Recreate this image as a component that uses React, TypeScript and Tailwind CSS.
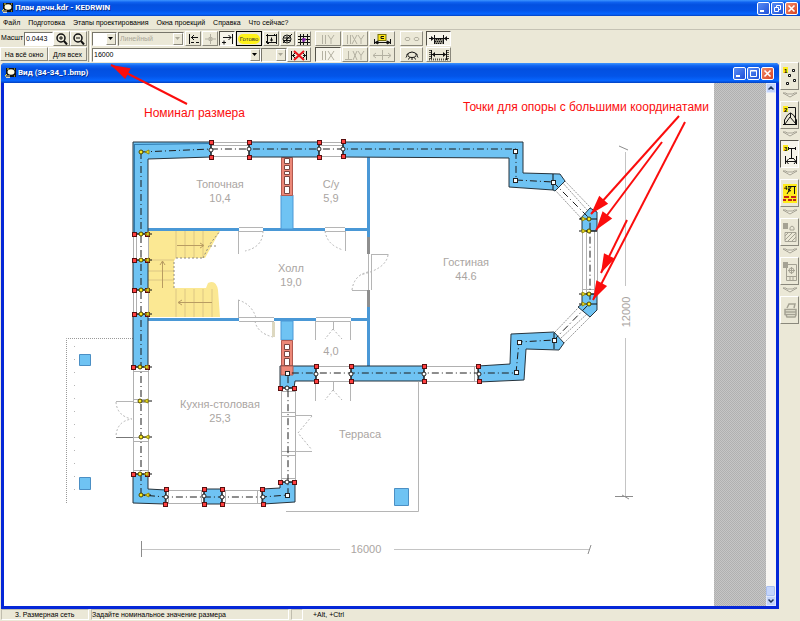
import type { ReactNode } from 'react';

const UI_FONT = "font-['Liberation_Sans',sans-serif]";

/* ---------- chrome ---------- */

function AppIcon() {
  return (
    <svg viewBox="0 0 11 10" className="w-[11px] h-[10px] shrink-0" aria-hidden="true">
      <rect x="1" y="0" width="10" height="9" fill="#111" />
      <ellipse cx="6" cy="4" rx="3.5" ry="2.8" fill="#fffbe0" />
      <path d="M2 1h2M9 1h1M9 8h1" stroke="#f5e642" />
      <path d="M0 8h5M1 9.5h4" stroke="#d8d4c0" />
      <path d="M2 6l-2 2" stroke="#f5e642" />
    </svg>
  );
}

function CaptionButton({
  label,
  danger,
  children,
}: {
  label: string;
  danger?: boolean;
  children: ReactNode;
}) {
  return (
    <button
      type="button"
      aria-label={label}
      className={
        'w-[13px] h-[13px] rounded-[2px] border border-white flex items-center justify-center ' +
        (danger ? 'bg-linear-to-br from-[#f08a68] to-[#d8401c]' : 'bg-linear-to-br from-[#5a8cf4] to-[#2050d8]')
      }
    >
      <svg viewBox="0 0 11 11" className="w-[11px] h-[11px]" fill="none" stroke="#fff">
        {children}
      </svg>
    </button>
  );
}

function TitleBar({ title, restore, size }: { title: string; restore?: boolean; size: string }) {
  return (
    <div
      className={
        'shrink-0 flex items-center bg-[linear-gradient(#3d95ff_0%,#0f62f0_14%,#0350e0_30%,#0354e8_65%,#0766ff_88%,#0340c0_100%)] ' +
        size
      }
    >
      <AppIcon />
      <span className="ml-[2px] flex-1 whitespace-nowrap font-bold text-[8px] leading-[12px] text-white font-['Roboto',sans-serif] [text-shadow:1px_1px_0_#0a2f90]">
        {title}
      </span>
      <div className="flex gap-px">
        <CaptionButton label="Свернуть">
          <path d="M2 8h4" strokeWidth="2" />
        </CaptionButton>
        <CaptionButton label={restore ? 'Восстановить' : 'Развернуть'}>
          {restore ? (
            <path d="M4.500 4V2.500h4v4H7M2.500 4.500h4v4h-4z" />
          ) : (
            <path d="M2.500 3v5.500h6V2.500h-6M2 3h7" />
          )}
        </CaptionButton>
        <CaptionButton label="Закрыть" danger>
          <path d="M2.500 2.500l6 6M8.500 2.500l-6 6" strokeWidth="1.600" />
        </CaptionButton>
      </div>
    </div>
  );
}

const MENU = ['Файл', 'Подготовка', 'Этапы проектирования', 'Окна проекций', 'Справка', 'Что сейчас?'];

function MenuBar() {
  return (
    <nav className="shrink-0 h-[14px] pl-[3px] flex items-center gap-2 border-b border-[#c5c2b4]">
      {MENU.map((item) => (
        <button key={item} type="button" className="text-[7px] leading-[10px] whitespace-nowrap text-black">
          {item}
        </button>
      ))}
    </nav>
  );
}

/* ---------- toolbar ---------- */

const RAISED = 'border border-t-white border-l-white border-r-[#8a887c] border-b-[#8a887c] bg-[#ebe8d7]';
const SUNKEN = 'border border-t-[#55534a] border-l-[#55534a] border-r-white border-b-white bg-[#f6f4ea]';

function Tool({
  label,
  width,
  pressed,
  disabled,
  children,
}: {
  label: string;
  width: string;
  pressed?: boolean;
  disabled?: boolean;
  children: ReactNode;
}) {
  return (
    <button
      type="button"
      aria-label={label}
      disabled={disabled}
      className={'h-[15px] flex items-center justify-center ' + width + ' ' + (pressed ? SUNKEN : RAISED)}
    >
      {children}
    </button>
  );
}

function Glyph({ wide, dim, children }: { wide?: boolean; dim?: boolean; children: ReactNode }) {
  return (
    <svg
      viewBox={wide ? '0 0 22 12' : '0 0 13 12'}
      className={(wide ? 'w-[22px]' : 'w-[13px]') + ' h-[12px] shrink-0'}
      fill="none"
      stroke={dim ? '#b4b1a2' : '#111'}
    >
      {children}
    </svg>
  );
}

function DropDown({
  label,
  value,
  width,
  disabled,
}: {
  label: string;
  value: string;
  width: string;
  disabled?: boolean;
}) {
  return (
    <div
      className={
        'relative h-[14px] border border-t-[#77756a] border-l-[#77756a] border-r-white border-b-white ' +
        width +
        (disabled ? ' bg-[#ebe8d7] text-[#aaa798]' : ' bg-white text-black')
      }
    >
      <select
        aria-label={label}
        disabled={disabled}
        defaultValue={value}
        className="appearance-none block w-full h-full pl-px text-[7px] leading-[11px] bg-transparent"
      >
        <option value={value}>{value}</option>
      </select>
      <span
        className={
          'absolute right-0 top-0 w-[10px] h-full flex items-center justify-center pointer-events-none ' + RAISED
        }
      >
        <svg viewBox="0 0 6 4" className="w-[6px] h-[4px]" fill={disabled ? '#aaa798' : '#000'}>
          <path d="M0 0h5L2.500 3z" />
        </svg>
      </span>
    </div>
  );
}

function Divider() {
  return <div className="w-[3px] mx-px self-stretch border-l border-r border-l-[#a09d8e] border-r-white" />;
}

function Toolbar() {
  return (
    <div className="shrink-0 h-[32px] flex items-center pt-px text-black">
      <div className="flex flex-col gap-px">
        <div className="flex items-center h-[15px]">
          <label htmlFor="scale" className="w-[24px] pl-px text-[7px]">
            Масшт
          </label>
          <input
            id="scale"
            defaultValue="0.0443"
            className="w-[29px] h-[14px] px-px text-[7px] bg-white border border-t-[#77756a] border-l-[#77756a] border-r-white border-b-white"
          />
          <Tool label="Увеличить" width="w-[17px]">
            <Glyph>
              <circle cx="6" cy="5" r="4" strokeWidth="1.500" />
              <path d="M4 5h4M6 3v4" />
              <path d="M9 8l3 3.500" strokeWidth="2" />
            </Glyph>
          </Tool>
          <Tool label="Уменьшить" width="w-[17px]">
            <Glyph>
              <circle cx="6" cy="5" r="4" strokeWidth="1.500" />
              <path d="M4 5h4" />
              <path d="M9 8l3 3.500" strokeWidth="2" />
            </Glyph>
          </Tool>
        </div>
        <div className="flex h-[15px]">
          <button type="button" className={'w-[48px] h-[14px] text-[7px] leading-[11px] whitespace-nowrap ' + RAISED}>
            На всё окно
          </button>
          <button type="button" className={'w-[39px] h-[14px] text-[7px] leading-[11px] whitespace-nowrap ' + RAISED}>
            Для всех
          </button>
        </div>
      </div>
      <Divider />
      <div className="flex flex-col gap-px">
        <div className="flex items-center gap-px h-[15px]">
          <DropDown label="Слой" value="" width="w-[25px]" />
          <DropDown label="Тип размера" value="Линейный" width="w-[66px]" disabled />
          <Tool label="Начало" width="w-[16px]">
            <Glyph>
              <path d="M2.500 1v10M4 4.500h7M4 9.500h3M9 9.500h3M7 2L4.500 4.500 7 7" />
            </Glyph>
          </Tool>
          <Tool label="Точка" width="w-[16px]" disabled>
            <Glyph dim>
              <path d="M1 6h11M6.500 1v10M5 4.500h3v3H5z" />
            </Glyph>
          </Tool>
          <Tool label="Конец" width="w-[16px]" pressed>
            <Glyph>
              <path d="M11.500 1v10M2 4.500h8M1 9.500h4M3 7.500v4M7.500 2L10 4.500 7.500 7" />
            </Glyph>
          </Tool>
          <button
            type="button"
            className="w-[26px] h-[15px] border border-black bg-[#ebe8d7] flex items-center justify-center"
          >
            <span className="w-[22px] h-[10px] rounded-full bg-[#fff21a] text-[6px] leading-[10px] text-center text-[#333]">
              Готово
            </span>
          </button>
          <Tool label="Контур" width="w-[16px]">
            <Glyph>
              <path d="M2.500 1v10M11.500 1v10M1 2.500h11M1 9.500h11M5 7h3M6.500 4.500v4" />
              <path d="M9 1l3 3M1 8l3 3" />
            </Glyph>
          </Tool>
          <Tool label="Окружность" width="w-[15px]">
            <Glyph>
              <circle cx="6" cy="6" r="4" />
              <path d="M2 10L11 1M3 5h6M3 7.500h6M6 3v6" />
            </Glyph>
          </Tool>
          <Tool label="Сетка" width="w-[15px]">
            <Glyph>
              <path d="M3.500 1v11M6.500 1v11M10.500 1v11M1 3.500h12M1 6.500h12M1 9.500h12" />
              <path d="M5 6.500h4M6.500 5v4" stroke="#7b1fa2" strokeWidth="2" />
            </Glyph>
          </Tool>
        </div>
        <div className="flex items-center h-[15px]">
          <DropDown label="Номинал размера" value="16000" width="w-[169px]" />
          <DropDown label="Допуск" value="" width="w-[26px]" disabled />
          <Tool label="Удалить размер" width="w-[24px]">
            <Glyph wide>
              <path d="M3.500 2v9M18.500 2v9M4 6.500h3M15 6.500h3M7 4L4.500 6.500 7 9M15 4l2.500 2.500L15 9" />
              <path d="M6 2l10 9M16 2L6 11" stroke="#e8141c" strokeWidth="2" />
            </Glyph>
          </Tool>
        </div>
      </div>
      <div className="ml-[4px] flex flex-col gap-px">
        <div className="flex gap-px">
          <Tool label="Параллельно Y" width="w-[26px]" disabled>
            <Glyph wide dim>
              <path d="M5.500 2v9M8.500 2v9M11 2l3 4.500L17 2M14 6.500V11" />
            </Glyph>
          </Tool>
          <Tool label="Параллельно XY" width="w-[26px]" disabled>
            <Glyph wide dim>
              <path d="M3.500 2v9M6.500 2v9M8 2l5 9M13 2L8 11M14 2l3 4.500L20 2M17 6.500V11" />
            </Glyph>
          </Tool>
          <Tool label="Закрепить размер" width="w-[26px]">
            <Glyph wide>
              <rect x="7" y="1.500" width="8" height="6" fill="#ffe81a" stroke="#77700c" />
              <path d="M13 3.500h-3v2h3M3.500 6v5M19.500 6v5M4 9.500h15" />
              <path d="M4 9.500l3-1.500v3zM19 9.500l-3-1.500v3z" fill="#111" />
            </Glyph>
          </Tool>
        </div>
        <div className="flex gap-px">
          <Tool label="Параллельно X" width="w-[26px]" pressed disabled>
            <Glyph wide dim>
              <path d="M5.500 2v9M8.500 2v9M11 2l6 9M17 2l-6 9" />
            </Glyph>
          </Tool>
          <Tool label="Перпендикулярно XY" width="w-[26px]" disabled>
            <Glyph wide dim>
              <path d="M4.500 2v8M1 10.500h7M9 2l4 9M13 2L9 11M14 2l3 4.500L20 2M17 6.500V11" />
            </Glyph>
          </Tool>
          <Tool label="По центру" width="w-[26px]" disabled>
            <Glyph wide dim>
              <path d="M2 6.500h18M11.500 1v10M5 4L2 6.500 5 9M17 4l3 2.500L17 9" />
            </Glyph>
          </Tool>
        </div>
      </div>
      <div className="ml-[5px] flex flex-col gap-px">
        <Tool label="Связать" width="w-[23px]" disabled>
          <Glyph wide dim>
            <path d="M5 4.500h3l1 1.500-1 1.500H5L4 6zM14 4.500h3l1 1.500-1 1.500h-3L13 6z" />
          </Glyph>
        </Tool>
        <Tool label="Показать" width="w-[23px]">
          <Glyph wide>
            <path d="M5 6.500q6-7 12 0M7 4.500q-1 4 4 4t4-4" />
            <path d="M6 7l-1 1.500M16 7l1 1.500M11 9v2M8.500 8.500l-1 2M13.500 8.500l1 2" />
          </Glyph>
        </Tool>
      </div>
      <div className="ml-[3px] flex flex-col gap-px">
        <Tool label="Размер снаружи" width="w-[25px]" pressed>
          <Glyph wide>
            <rect x="7" y="5" width="8" height="6" fill="#8a887c" stroke="none" />
            <path d="M6.500 2v9M15.500 2v9M1 5.500h20" />
            <path d="M6 5.500L3 3v5zM16 5.500l3-2.500v5z" fill="#111" stroke="none" />
            <path d="M8 6.500h6M7 8.500h8M8 10.500h6" strokeDasharray="1 1" />
          </Glyph>
        </Tool>
        <Tool label="Размер внутри" width="w-[25px]">
          <Glyph wide>
            <path d="M3.500 1v10M18.500 1v10M4 5.500h14" />
            <path d="M4 5.500L7 3v5zM18 5.500L15 3v5z" fill="#111" stroke="none" />
            <path d="M2 1v10M20 1v10M1 10.500h20" strokeWidth="2" strokeDasharray="1 1" stroke="#55534a" />
          </Glyph>
        </Tool>
      </div>
    </div>
  );
}

/* ---------- stage bar on the right ---------- */

function StageNumber({ n, dim }: { n: string; dim?: boolean }) {
  return (
    <>
      <rect x="1" y="1" width="5" height="6" fill={dim ? '#a5a294' : '#ffec1c'} stroke="none" />
      <text x="2" y="7" fontSize="6" fontWeight="bold" fill={dim ? '#a5a294' : '#000'} stroke="none">
        {n}
      </text>
    </>
  );
}

const STAGES: { label: string; state?: 'pressed' | 'disabled'; art: ReactNode }[] = [
  {
    label: '1. Опорные точки',
    art: (
      <>
        <StageNumber n="1" />
        <path d="M10.500 3.500h2v2h-2zM6.500 8.500h2v2h-2zM11.500 13.500h2v2h-2zM4.500 16.500h2v2h-2z" fill="#fff" />
      </>
    ),
  },
  {
    label: '2. Контуры',
    art: (
      <>
        <path d="M6 2.500h7.500v17M2.500 20v-5l3-5 3-2 3 2 3 5v5M1 19.500h14M8.500 8v4M3 19l5-7 6 7" />
        <StageNumber n="2" />
      </>
    ),
  },
  {
    label: '3. Размерная сеть',
    state: 'pressed',
    art: (
      <>
        <StageNumber n="3" />
        <path d="M6 4.500h8M6.500 3v3M13.500 3v3M9.500 4v10M3.500 12v8M14.500 12v8M4 17.500h10M7 14.500h5M6.500 15l-2 2.500 2 2.500M12 15l2 2.500-2 2.500" />
      </>
    ),
  },
  {
    label: '4. Конструкция',
    art: (
      <>
        <rect x="1" y="1" width="14" height="19" fill="#ffec1c" stroke="none" />
        <path d="M1 3.500h13M12.500 3v8M7 4v5M4 5l5 3M9 4L5 11" />
        <path d="M2 14h5M9 14h5M1 17h3M6 17h4M11 17h3" stroke="#c22418" strokeWidth="2" />
        <StageNumber n="4" />
      </>
    ),
  },
  {
    label: '5. Фасад',
    state: 'disabled',
    art: (
      <>
        <StageNumber n="5" dim />
        <path d="M8 8h4V5.500L10 4 8 5.500zM3 10.500h11v9H3zM3 14l3-3M3 18l7-7M6 19l8-8M10 19l4-4" />
      </>
    ),
  },
  {
    label: '6. Чертёж',
    state: 'disabled',
    art: (
      <>
        <path d="M4.500 3.500h10v16h-10zM5 15.500h9M8 16v4M11 16v4M6 9.500h7M9.500 6v7" />
        <circle cx="9.500" cy="9.500" r="2.500" />
        <StageNumber n="6" dim />
      </>
    ),
  },
  {
    label: '7. Печать',
    state: 'disabled',
    art: <path d="M5 8l2-4h6l-1 4M3 9.500h11v5H3zM3 12h11M5 17h8l1-2M4 14.500l1 3" strokeWidth="1.500" />,
  },
];

function StageBar() {
  return (
    <aside className="w-[21px] shrink-0 flex flex-col items-center bg-[#ebe8d7]">
      {STAGES.map((s, i) => (
        <div key={s.label} className="flex flex-col items-center">
          {i > 0 && (
            <svg viewBox="0 0 16 10" className="w-[16px] h-[11px]" fill="#f3f0e2" stroke="#a5a294">
              <path d="M1 2.500h3l1 1h6l1-1h3L8 6.500z" />
            </svg>
          )}
          <button
            type="button"
            aria-label={s.label}
            disabled={s.state === 'disabled'}
            className={
              'w-[19px] h-[28px] flex items-center justify-center ' + (s.state === 'pressed' ? SUNKEN : RAISED)
            }
          >
            <svg
              viewBox="0 0 16 21"
              className="w-[16px] h-[21px]"
              fill="none"
              stroke={s.state === 'disabled' ? '#a5a294' : '#111'}
            >
              {s.art}
            </svg>
          </button>
        </div>
      ))}
    </aside>
  );
}

/* ---------- floor plan ---------- */

const WALLS = [
  '133,142 211,142 211,157 148,159 148,234 133,234',
  '249,142 319,142 319,157 249,157',
  '343,142 523,142 523,173 560,174 565,181 555,191 553,190 509,187 509,158 343,157',
  '133,260 148,260 148,290 133,290',
  '133,314 148,314 148,367 133,367',
  '133,474 148,474 148,489 166,490 165,504 133,503',
  '204,489 222,489 222,504 204,504',
  '262,489 280,488 280,482 295,482 295,502 263,504',
  '280,366 316,366 316,381 295,381 294,388 280,388',
  '351,366 424,366 424,381 351,381',
  '478,366 510,364 511,334 554,332 564,343 559,350 526,349 524,380 479,382',
  '580,219 590,208 597,212 597,231 582,231 582,219',
  '582,294 597,294 597,310 590,317 578,307 582,304',
];

const AXES = [
  'M141 152L211 149H516V180L553 182',
  'M141 152V495L166 497H262L288 495V373H516L519 342L554 340',
  'M553 182L590 219V303L554 340',
];

const WINDOWS = [
  'M211 142h38M211 145h38M211 156h38M319 142h24M319 145h24M319 156h24',
  'M133 234v26M148 234v26M136 234v26M133 290v24M148 290v24M136 290v24',
  'M133 367v107M148 367v107M133 371h15M133 399h15M133 402h15M133 437h15M133 441h15M133 470h15',
  'M281 388v94M295 388v94M281 391h14M281 412h14M281 416h14M281 451h14M281 455h14M281 478h14',
  'M166 490h38M166 503h38M222 490h40M222 503h40M168 490v13M201 490v13M225 490v13M257 490v13',
  'M316 366h35M316 381h35M424 366h54M424 381h54M474 366v15',
  'M582 231v63M597 231v63M586 231v63M594 231v63M582 289h15',
];

const DIAGONALS = 'M555 190L581 218M565 181L591 208M562 182L588 211M555 332L579 307M564 343L590 317M561 338L587 314';

const RED_NODES = [
  [211, 142], [211, 157], [249, 142], [249, 157], [319, 142], [319, 157], [343, 141], [343, 156],
  [134, 234], [147, 234], [134, 260], [147, 260], [134, 290], [147, 290], [134, 314], [147, 314],
  [133, 367], [147, 367], [133, 474], [147, 474],
  [166, 489], [165, 504], [204, 489], [204, 504], [222, 489], [222, 504], [262, 489], [263, 504],
  [280, 482], [294, 482], [280, 388], [294, 388],
  [316, 366], [316, 381], [351, 366], [351, 381], [424, 366], [424, 381], [478, 366], [479, 381],
];

const WHITE_NODES = [
  [211, 150], [249, 149], [319, 149], [343, 149], [166, 497], [204, 496], [222, 497], [263, 497],
  [287, 482], [287, 388], [316, 374], [351, 374], [424, 374], [479, 374],
];

const CORNER_NODES = [
  [515, 151], [515, 180], [553, 182], [519, 342], [554, 340], [516, 372], [287, 373], [287, 495],
];

const YELLOW_NODES = [
  [141, 152], [141, 234], [141, 260], [141, 290], [141, 314], [140, 367], [140, 401], [141, 437], [140, 474], [141, 495],
];

const SUPPORT_NODES = [
  [589, 219], [589, 231], [589, 294], [589, 304],
];

const ROOMS: { name: string; area?: string; x: number; y: number }[] = [
  { name: 'Топочная', area: '10,4', x: 220, y: 188 },
  { name: 'С/у', area: '5,9', x: 331, y: 188 },
  { name: 'Холл', area: '19,0', x: 291, y: 272 },
  { name: 'Гостиная', area: '44.6', x: 466, y: 266 },
  { name: 'Кухня-столовая', area: '25,3', x: 220, y: 408 },
  { name: 'Терраса', x: 360, y: 438 },
  { name: '4,0', x: 331, y: 355 },
];

function FloorPlan() {
  return (
    <svg
      viewBox="4 83 710 522"
      className="w-[710px] h-[522px] shrink-0 bg-white"
      role="img"
      aria-label="План первого этажа"
      fill="none"
    >
      {/* stairs */}
      <path
        d="M148 231H220L205 258H176L174 261V288H206L208 283Q216 279 218 290L220 317H148Z"
        fill="#fbe893"
      />
      <path
        d="M176 231v27M185 231v27M194 231v27M203 231v27M176 289v28M185 289v28M194 289v28M203 289v28M212 289v28M148 260h26M148 271h26M148 280h26"
        stroke="#dcc684"
      />
      <path
        d="M177 245.500h26M200 243l4 2.500-4 2.500M178 302.500h34M182 300l-4 2.500 4 2.500M162.500 288v-27M160 265l2.500-4 2.500 4"
        stroke="#b89c62"
      />
      <path d="M203 258l7-14 10-13M210 246h6M176 258h28M174 262v26" stroke="#8f8a80" strokeDasharray="2 2" />

      {/* doors, terrace and dimension lines */}
      <g stroke="#b5b5b5">
        <path d="M239 227.500h24M239 231.500h24M325 227.500h20M325 231.500h20M239 317.500h35M239 321.500h35M316 317.500h35M316 321.500h35" />
        <path d="M238.500 231v23M238.500 300v18M345.500 231v20M315.500 321v19M350.500 321v19M315.500 382v19M350.500 382v19M333.500 321v8M333.500 382v8" />
        <path d="M368.500 254v36M371.500 254v36M371.500 254.500h17M352 290.500h16M295 415.500h17M295 451.500h17M116 401.500h17" />
        <path d="M116 437.500h17" stroke="#777" />
        <g strokeDasharray="2 2">
          <path d="M263 231q0 16-18 20M325 231q2 14 18 19M238 300q14 4 18 18M388 255q-2 14-28 20M352 290q2-15 16-18" />
          <path d="M255 321q2 12 18 16M333 329l-8 10M333 329l9 10M333 390l-8 10M333 390l9 10M116 402q1 14 16 17q-15 2-16 17M312 416l-14 17 14 17" />
        </g>
        <path d="M273.500 322v15" stroke="#ddd8c0" strokeWidth="3" />
        <path d="M418.500 382v129.500H286" />
        <path d="M133 338.500H66.500V503" strokeDasharray="1 1" stroke="#999" />
        <path d="M74.500 346v145" strokeDasharray="1 12" />
        <path d="M141 549.500h199M394 549.500h196M625.500 152v134M625.500 338v158" stroke="#c4c4c4" />
        <path d="M141.500 541v16M591 545l-3 9M619 146l9 4M615 496.500h18M622 495l7 4" stroke="#8c8c8c" />
      </g>

      {/* inner partitions */}
      <g fill="#4a98d6">
        <path d="M148 228h91v3h-91zM263 228h62v3h-62zM345 228h24v3h-24zM148 318h91v3h-91zM274 318h42v3h-42zM351 318h18v3h-18z" />
        <path d="M367 157h3v80h-3zM367 307h3v59h-3z" />
      </g>
      <path d="M367 237h3v17h-3zM367 290h3v17h-3z" fill="#8e8e8e" />
      <path d="M281 195h12v34h-12zM281 321h12v19h-12z" fill="#6fc3f3" stroke="#4a98d6" />
      <path d="M281.500 157.500h11v38h-11zM281.500 340.500h11v35h-11z" fill="#ec8878" stroke="#b25a50" />

      {/* posts */}
      <path d="M79.500 354.500h11v11h-11zM79.500 477.500h11v12h-11zM394.500 488.500h14v17h-14z" fill="#6fc3f3" stroke="#4b8fc4" />

      {/* window openings and outer walls */}
      <g stroke="#b0b0b0" shapeRendering="crispEdges">
        {WINDOWS.map((d) => (
          <path key={d} d={d} />
        ))}
      </g>
      <path d={DIAGONALS} stroke="#999" strokeDasharray="2 1" />
      <g fill="#6fc3f3" stroke="#26333c">
        {WALLS.map((points) => (
          <polygon key={points} points={points} />
        ))}
      </g>
      <path d="M134 144.500l77-1M134.500 144v90" stroke="#2d7ab0" />
      <path d="M281 366h12v9h-12z" fill="#ec8878" stroke="#b25a50" />
      <path
        d="M284.500 158.500h5v5h-5zM284.500 165.500h5v4h-5zM284.500 171.500h5v3h-5zM284.500 176.500h5v8h-5zM284.500 186.500h5v7h-5zM284.500 344.500h5v5h-5zM284.500 351.500h5v5h-5zM284.500 358.500h5v7h-5z"
        fill="#fff"
        stroke="#7c4640"
      />
      <g stroke="#1d1d1d" strokeDasharray="7 3 1 3">
        {AXES.map((d) => (
          <path key={d} d={d} />
        ))}
      </g>

      {/* section cuts */}
      <path
        d="M211 142v15M249 142v15M319 142v15M343 141v15M133 234h19M133 260h19M133 290h19M133 314h19M133 367h19M133 474h19M140 401h12M140 437h12M141 495h10M166 489v15M204 489v15M222 489v15M262 489v15M280 482h15M280 388h15M316 366v15M351 366v15M424 366v15M478 366v15M579 219h18M579 231h18M579 294h18M579 304h18M553 174v16M554 333v16"
        stroke="#111"
      />
      {RED_NODES.map(([x, y]) => (
        <rect key={`${x}-${y}`} x={x - 1.5} y={y - 1.5} width="4" height="4" fill="#ff4040" stroke="#5a0f0f" />
      ))}
      {WHITE_NODES.map(([x, y]) => (
        <circle key={`${x}-${y}`} cx={x} cy={y} r="2" fill="#fff" stroke="#222" />
      ))}
      {CORNER_NODES.map(([x, y]) => (
        <rect key={`${x}-${y}`} x={x - 1.5} y={y - 1.5} width="4" height="4" fill="#fff" stroke="#222" />
      ))}
      {YELLOW_NODES.map(([x, y]) => (
        <g key={`${x}-${y}`} fill="#fbea1e" stroke="#4c4600">
          <circle cx={x} cy={y} r="2" />
          <path d={`M${x + 4} ${y}l4-2v4z`} stroke="#8d8410" />
        </g>
      ))}
      {SUPPORT_NODES.map(([x, y]) => (
        <g key={`${x}-${y}`} fill="#fbea1e" stroke="#4c4600">
          <circle cx={x} cy={y} r="2" />
          <path d={`M${x - 3} ${y}l-4-2v4z`} stroke="#8d8410" />
        </g>
      ))}

      {/* labels */}
      <g fill="#aaa5a2" fontSize="11" textAnchor="middle">
        {ROOMS.map((r) => (
          <text key={r.name} x={r.x} y={r.y}>
            {r.name}
            {r.area && (
              <tspan x={r.x} dy="14">
                {r.area}
              </tspan>
            )}
          </text>
        ))}
        <text x="366" y="553">
          16000
        </text>
        <text transform="translate(630 312) rotate(-90)">12000</text>
      </g>
    </svg>
  );
}

/* ---------- callouts ---------- */

function Arrow({ from, to }: { from: [number, number]; to: [number, number] }) {
  const angle = Math.atan2(to[1] - from[1], to[0] - from[0]);
  const head = (len: number, side: number) =>
    `${to[0] - len * Math.cos(angle) + side * Math.sin(angle)},${to[1] - len * Math.sin(angle) - side * Math.cos(angle)}`;
  return (
    <>
      <line x1={from[0]} y1={from[1]} x2={to[0]} y2={to[1]} stroke="#fb0d0d" strokeWidth="2" />
      <polygon points={`${to[0]},${to[1]} ${head(19, 6)} ${head(19, -6)}`} fill="#fb0d0d" />
    </>
  );
}

function Callouts() {
  return (
    <svg viewBox="0 0 800 621" className="absolute left-0 top-0 w-[800px] h-[621px] pointer-events-none">
      <Arrow from={[187, 104]} to={[111, 65]} />
      <Arrow from={[679, 116]} to={[591, 214]} />
      <Arrow from={[662, 142]} to={[596, 230]} />
      <Arrow from={[685, 122]} to={[593, 300]} />
      <Arrow from={[627, 220]} to={[601, 273]} />
      <g fill="#fb0d0d" fontSize="12">
        <text x="144" y="117">
          Номинал размера
        </text>
        <text x="463" y="111">
          Точки для опоры с большими координатами
        </text>
      </g>
    </svg>
  );
}

/* ---------- drawing window ---------- */

function ScrollBar() {
  const button =
    'w-[10px] h-[10px] shrink-0 rounded-[1px] bg-[#c3d4fb] border border-[#dfe8fd] flex items-center justify-center';
  return (
    <div className="w-[10px] shrink-0 flex flex-col bg-[#f8f6f2]">
      <button type="button" aria-label="Вверх" className={button}>
        <svg viewBox="0 0 6 4" className="w-[6px] h-[4px]" fill="none" stroke="#20345c" strokeWidth="1.500">
          <path d="M0.500 3.500L3 1l2.500 2.500" />
        </svg>
      </button>
      <div className="flex-1" />
      <div className="h-[10px] w-[9px] bg-[#c3d4fb] border border-[#a9bff0] rounded-[1px]" />
      <button type="button" aria-label="Вниз" className={button}>
        <svg viewBox="0 0 6 4" className="w-[6px] h-[4px]" fill="none" stroke="#20345c" strokeWidth="1.500">
          <path d="M0.500 0.500L3 3l2.500-2.500" />
        </svg>
      </button>
    </div>
  );
}

function DrawingWindow() {
  return (
    <section className="flex-1 min-w-0 flex flex-col ml-px mt-px rounded-t-[4px] overflow-hidden bg-[#0527d8]">
      <TitleBar title="Вид (34-34_1.bmp)" size="h-[20px] pl-[4px] pr-[5px]" />
      <div className="flex-1 min-h-0 flex mx-[3px] mb-[3px] overflow-hidden bg-white">
        <FloorPlan />
        <div className="flex-1 bg-[repeating-conic-gradient(#b0b0b0_0_25%,#c6c6c6_0_50%)] bg-size-[2px_2px]" />
        <ScrollBar />
      </div>
    </section>
  );
}

function StatusBar() {
  const cell = 'h-[11px] border border-t-[#c0bdae] border-l-[#c0bdae] border-r-white border-b-white flex items-center';
  return (
    <footer className="shrink-0 h-[12px] pl-px flex items-start gap-[2px] text-[7px] leading-[9px] text-black whitespace-nowrap">
      <div className={cell + ' w-[88px] pl-[13px]'}>3. Размерная сеть</div>
      <div className={cell + ' w-[198px]'}>Задайте номинальное значение размера</div>
      <div className={cell + ' w-[12px]'} />
      <div className="flex-1 pl-[8px] flex items-center h-[11px]">+Alt, +Ctrl</div>
    </footer>
  );
}

export default function App() {
  return (
    <div className={'relative h-screen flex flex-col overflow-hidden bg-[#ebe8d7] ' + UI_FONT}>
      <TitleBar title="План дачн.kdr - KEDRWIN" restore size="h-[16px] pl-[2px] pr-[2px]" />
      <MenuBar />
      <Toolbar />
      <main className="flex-1 min-h-0 flex">
        <DrawingWindow />
        <StageBar />
      </main>
      <StatusBar />
      <Callouts />
    </div>
  );
}
